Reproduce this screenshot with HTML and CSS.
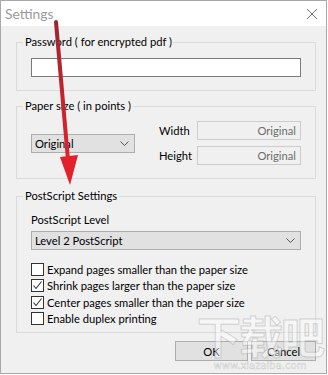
FILE: index.html
```html
<!DOCTYPE html>
<html>
<head>
<meta charset="utf-8">
<link rel="stylesheet" href="styles.css">
</head>
<body>
<div class="window">
  <div class="titlebar">
    <span class="title">Settings</span>
    <svg class="close" width="12" height="12" viewBox="0 0 12 12"><path d="M1 1L11 11M11 1L1 11" stroke="#6e6e6e" stroke-width="1" fill="none"/></svg>
  </div>
  <div class="content">
    <fieldset class="group g1">
      <legend>Password ( for encrypted pdf )</legend>
      <div class="textbox"></div>
    </fieldset>
    <fieldset class="group g2">
      <legend>Paper size ( in points )</legend>
      <div class="paper-row">
        <div class="combo small"><span>Original</span><svg class="chev" width="9" height="5" viewBox="0 0 9 5"><path d="M0.5 0.5L4.5 4.5L8.5 0.5" stroke="#555" fill="none"/></svg></div>
        <div class="dims">
          <span class="dim-label">Width</span><div class="disabled">Original</div>
          <span class="dim-label">Height</span><div class="disabled">Original</div>
        </div>
      </div>
    </fieldset>
    <fieldset class="group g3">
      <legend>PostScript Settings</legend>
      <div class="field-label">PostScript Level</div>
      <div class="combo wide"><span>Level 2 PostScript</span><svg class="chev" width="9" height="5" viewBox="0 0 9 5"><path d="M0.5 0.5L4.5 4.5L8.5 0.5" stroke="#555" fill="none"/></svg></div>
      <div class="checks">
        <div class="check"><span class="box"></span><span>Expand pages smaller than the paper size</span></div>
        <div class="check"><span class="box"><svg width="11" height="11" viewBox="0 0 11 11"><path d="M1.5 5.5L4 8.5L9.5 1.5" stroke="#333" stroke-width="1.1" fill="none"/></svg></span><span>Shrink pages larger than the paper size</span></div>
        <div class="check"><span class="box"><svg width="11" height="11" viewBox="0 0 11 11"><path d="M1.5 5.5L4 8.5L9.5 1.5" stroke="#333" stroke-width="1.1" fill="none"/></svg></span><span>Center pages smaller than the paper size</span></div>
        <div class="check"><span class="box"></span><span>Enable duplex printing</span></div>
      </div>
    </fieldset>
    <div class="buttons">
      <div class="btn ok">OK</div>
      <div class="btn cancel">Cancel</div>
    </div>
  </div>
</div>
<div class="watermark"><span class="wm-big">下载吧</span><span class="wm-url">www.xiazaiba.com</span></div>
<svg class="arrow" width="328" height="375" viewBox="0 0 328 375">
  <defs>
    <linearGradient id="ag" x1="0" y1="0" x2="0" y2="1">
      <stop offset="0" stop-color="#9e2530"/>
      <stop offset="1" stop-color="#e3212b"/>
    </linearGradient>
  </defs>
  <path d="M56 22L68 160" stroke="url(#ag)" stroke-width="4" stroke-linecap="round" fill="none"/>
  <path d="M60 157L78 155L70 185Z" fill="#e3212b"/>
</svg>
</body>
</html>
```
FILE: styles.css
```css
html, body {
  margin: 0;
  padding: 0;
  background: #ffffff;
}
body {
  width: 328px;
  height: 375px;
  overflow: hidden;
  font-family: Lato, "Noto Sans", sans-serif;
  font-size: 11.2px;
  color: #000;
}
.window {
  width: 327px;
  height: 374px;
  box-sizing: border-box;
  border: 1px solid #a9a9a9;
  display: flex;
  flex-direction: column;
  background: #f0f0f0;
}
.titlebar {
  height: 25px;
  background: #ffffff;
  display: flex;
  align-items: center;
  justify-content: space-between;
  padding: 0 8px 0 4px;
  flex: none;
}
.title {
  font-size: 13.8px;
  color: #9b9b9b;
  line-height: 20px;
}
.close { display: block; }
.content {
  flex: 1;
  padding: 0 10px 0 15px;
  display: flex;
  flex-direction: column;
}
.group {
  margin: 0;
  border: 1px solid #dadada;
  padding: 0 14px;
  min-width: 0;
}
.group legend {
  padding: 0 2px;
  margin-left: -8px;
  line-height: 16px;
}
.g1 { margin-top: 8px; padding-top: 8px; padding-bottom: 13px; }
.g2 { margin-top: 7px; padding-top: 7px; padding-bottom: 13px; }
.g3 { margin-top: 9px; padding-top: 8px; padding-bottom: 5px; }
.textbox {
  height: 19px;
  box-sizing: border-box;
  border: 1px solid #7a7a7a;
  background: #fff;
}
.paper-row {
  display: flex;
  align-items: center;
}
.combo {
  height: 19px;
  box-sizing: border-box;
  border: 1px solid #adadad;
  background: #e1e1e1;
  display: flex;
  align-items: center;
  justify-content: space-between;
  padding: 0 5px 0 3px;
}
.combo.small { width: 104px; }
.chev { display: block; }
.dims {
  margin-left: 24px;
  display: grid;
  grid-template-columns: 38px 104px;
  row-gap: 6px;
  align-items: center;
}
.disabled {
  height: 19px;
  box-sizing: border-box;
  border: 1px solid #cccccc;
  background: #f0f0f0;
  color: #6d6d6d;
  text-align: right;
  padding-right: 4px;
  line-height: 17px;
}
.field-label {
  line-height: 16px;
  margin-bottom: 3px;
}
.checks {
  margin-top: 11px;
  display: flex;
  flex-direction: column;
}
.check {
  height: 16.5px;
  display: flex;
  align-items: center;
}
.box {
  width: 13px;
  height: 13px;
  box-sizing: border-box;
  border: 1px solid #333;
  background: #fff;
  margin-right: 3px;
  display: flex;
  align-items: center;
  justify-content: center;
  flex: none;
}
.box svg { display: block; }
.buttons {
  margin-top: 8px;
  display: flex;
  justify-content: flex-end;
  gap: 3px;
}
.btn {
  height: 20px;
  box-sizing: border-box;
  border: 1px solid #adadad;
  background: #e1e1e1;
  display: flex;
  align-items: center;
  justify-content: center;
}
.ok { width: 73px; }
.cancel { width: 65px; }
.arrow {
  position: absolute;
  left: 0;
  top: 0;
  pointer-events: none;
}
.watermark {
  position: absolute;
  left: 196px;
  top: 310px;
  width: 128px;
  display: flex;
  flex-direction: column;
  align-items: center;
  pointer-events: none;
}
.wm-big {
  font-family: "Noto Sans CJK SC", sans-serif;
  font-weight: 700;
  font-size: 44px;
  line-height: 50px;
  letter-spacing: -2px;
  color: rgba(255, 255, 255, 0.45);
  -webkit-text-stroke: 1px rgba(140, 140, 140, 0.35);
}
.wm-url {
  font-family: "DejaVu Sans", sans-serif;
  font-size: 10px;
  line-height: 11px;
  color: rgba(255, 255, 255, 0.6);
  -webkit-text-stroke: 0.5px rgba(140, 140, 140, 0.4);
}
```
